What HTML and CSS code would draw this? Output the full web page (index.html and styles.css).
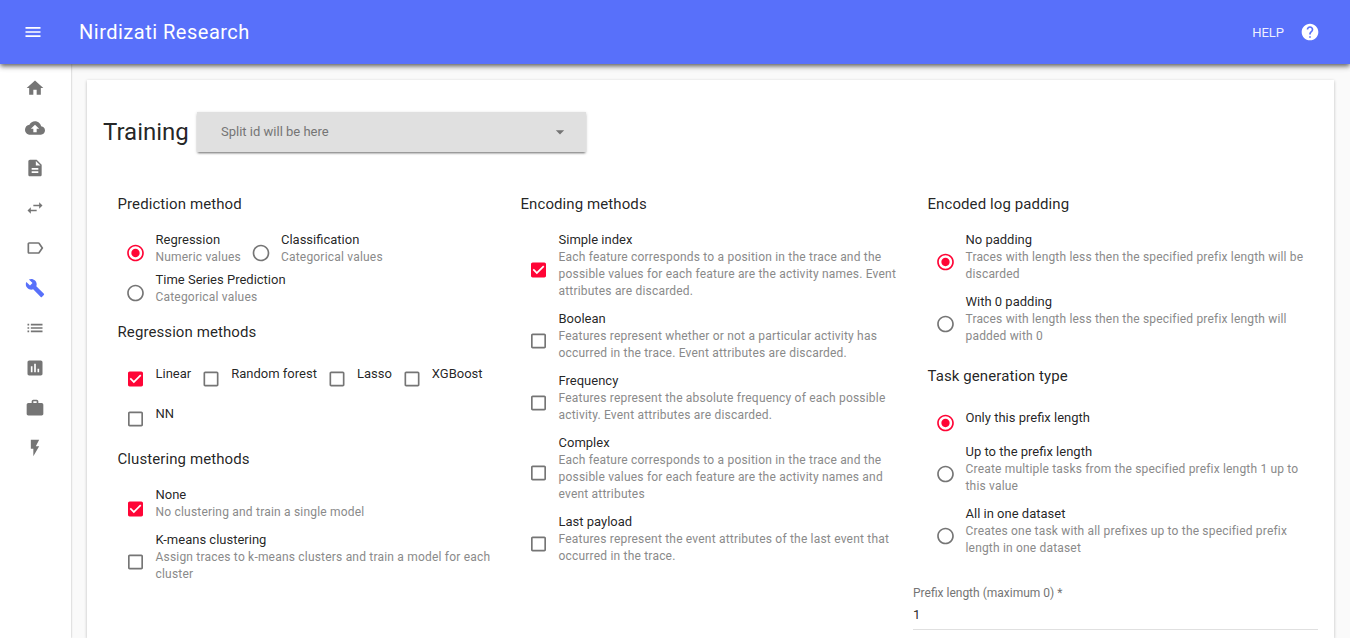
FILE: index.html
```html
<!DOCTYPE html>
<html lang="en">
<head>
<meta charset="utf-8">
<title>Nirdizati Research</title>
<link rel="stylesheet" href="styles.css">
</head>
<body>
<svg class="defs" aria-hidden="true">
  <symbol id="on" viewBox="0 0 24 24"><path d="M12 7c-2.76 0-5 2.24-5 5s2.24 5 5 5 5-2.24 5-5-2.24-5-5-5zm0-5C6.480 2 2 6.480 2 12s4.480 10 10 10 10-4.480 10-10S17.520 2 12 2zm0 18c-4.420 0-8-3.580-8-8s3.580-8 8-8 8 3.580 8 8-3.580 8-8 8z"/></symbol>
  <symbol id="off" viewBox="0 0 24 24"><path d="M12 2C6.480 2 2 6.480 2 12s4.480 10 10 10 10-4.480 10-10S17.520 2 12 2zm0 18c-4.420 0-8-3.580-8-8s3.580-8 8-8 8 3.580 8 8-3.580 8-8 8z"/></symbol>
  <symbol id="checked" viewBox="0 0 24 24"><path d="M19 3H5c-1.110 0-2 .9-2 2v14c0 1.100.89 2 2 2h14c1.110 0 2-.9 2-2V5c0-1.100-.89-2-2-2zm-9 14l-5-5 1.410-1.410L10 14.170l7.590-7.590L19 8l-9 9z"/></symbol>
  <symbol id="box" viewBox="0 0 24 24"><path d="M19 5v14H5V5h14m0-2H5c-1.100 0-2 .9-2 2v14c0 1.100.9 2 2 2h14c1.100 0 2-.9 2-2V5c0-1.100-.9-2-2-2z"/></symbol>
</svg>

<header class="toolbar">
  <svg class="icon menu" viewBox="0 0 24 24"><path d="M3 18h18v-2H3v2zm0-5h18v-2H3v2zm0-7v2h18V6H3z"/></svg>
  <h1 class="brand">Nirdizati Research</h1>
  <span class="help">HELP</span>
  <svg class="icon help-icon" viewBox="0 0 24 24"><path d="M12 2C6.480 2 2 6.480 2 12s4.480 10 10 10 10-4.480 10-10S17.520 2 12 2zm1 17h-2v-2h2v2zm2.070-7.750l-.9.92C13.450 12.900 13 13.500 13 15h-2v-.5c0-1.100.45-2.100 1.170-2.830l1.240-1.260c.37-.36.59-.86.59-1.410 0-1.100-.9-2-2-2s-2 .9-2 2H8c0-2.210 1.790-4 4-4s4 1.790 4 4c0 .88-.36 1.680-.93 2.250z"/></svg>
</header>

<div class="shell">
  <nav class="drawer">
    <svg class="icon" viewBox="0 0 24 24"><path d="M10 20v-6h4v6h5v-8h3L12 3 2 12h3v8z"/></svg>
    <svg class="icon" viewBox="0 0 24 24"><path d="M19.350 10.040C18.670 6.590 15.640 4 12 4 9.110 4 6.600 5.640 5.350 8.040 2.340 8.360 0 10.910 0 14c0 3.310 2.690 6 6 6h13c2.760 0 5-2.240 5-5 0-2.640-2.050-4.780-4.650-4.960zM14 13v4h-4v-4H7l5-5 5 5h-3z"/></svg>
    <svg class="icon" viewBox="0 0 24 24"><path d="M14 2H6c-1.100 0-1.990.9-1.990 2L4 20c0 1.100.89 2 1.990 2H18c1.100 0 2-.9 2-2V8l-6-6zm2 16H8v-2h8v2zm0-4H8v-2h8v2zm-3-5V3.500L18.500 9H13z"/></svg>
    <svg class="icon" viewBox="0 0 24 24"><path d="M6.990 11L3 15l3.990 4v-3H14v-2H6.990v-3zM21 9l-3.990-4v3H10v2h7.010v3L21 9z"/></svg>
    <svg class="icon" viewBox="0 0 24 24"><path d="M17.630 5.840C17.270 5.330 16.670 5 16 5L5 5.010C3.900 5.010 3 5.900 3 7v10c0 1.100.9 1.990 2 1.990L16 19c.67 0 1.270-.33 1.630-.84L22 12l-4.370-6.160zM16 17H5V7h11l3.550 5L16 17z"/></svg>
    <svg class="icon active" viewBox="0 0 24 24"><path d="M22.700 19l-9.100-9.100c.9-2.300.4-5-1.500-6.900-2-2-5-2.400-7.400-1.300L9 6 6 9 1.600 4.700C.4 7.100.9 10.100 2.900 12.100c1.900 1.900 4.600 2.400 6.900 1.500l9.100 9.100c.4.4 1 .4 1.400 0l2.300-2.300c.5-.4.5-1.100.1-1.400z"/></svg>
    <svg class="icon" viewBox="0 0 24 24"><path d="M3 13h2v-2H3v2zm0 4h2v-2H3v2zm0-8h2V7H3v2zm4 4h14v-2H7v2zm0 4h14v-2H7v2zM7 7v2h14V7H7z"/></svg>
    <svg class="icon" viewBox="0 0 24 24"><path d="M19 3H5c-1.100 0-2 .9-2 2v14c0 1.100.9 2 2 2h14c1.100 0 2-.9 2-2V5c0-1.100-.9-2-2-2zM9 17H7v-7h2v7zm4 0h-2V7h2v10zm4 0h-2v-4h2v4z"/></svg>
    <svg class="icon" viewBox="0 0 24 24"><path d="M20 6h-4V4c0-1.110-.89-2-2-2h-4c-1.110 0-2 .89-2 2v2H4c-1.110 0-1.990.89-1.990 2L2 19c0 1.110.89 2 2 2h16c1.110 0 2-.89 2-2V8c0-1.110-.89-2-2-2zm-6 0h-4V4h4v2z"/></svg>
    <svg class="icon" viewBox="0 0 24 24"><path d="M7 2v11h3v9l7-12h-4l4-8z"/></svg>
  </nav>

  <main class="card">
    <div class="title-row">
      <h2 class="title">Training</h2>
      <div class="select"><span>Split id will be here</span><svg class="arrow" viewBox="0 0 24 24"><path d="M7 10l5 5 5-5z"/></svg></div>
    </div>

    <div class="columns">
      <div class="col col-a">
        <section class="group">
          <h3 class="legend">Prediction method</h3>
          <div class="inline">
            <label class="control"><svg class="mark on"><use href="#on"/></svg><span>Regression<small>Numeric values</small></span></label>
            <label class="control"><svg class="mark"><use href="#off"/></svg><span>Classification<small>Categorical values</small></span></label>
            <label class="control"><svg class="mark"><use href="#off"/></svg><span>Time Series Prediction<small>Categorical values</small></span></label>
          </div>
        </section>
        <section class="group regression">
          <h3 class="legend">Regression methods</h3>
          <div class="inline plain">
            <label class="control"><svg class="mark on"><use href="#checked"/></svg><span>Linear</span></label>
            <label class="control"><svg class="mark"><use href="#box"/></svg><span>Random forest</span></label>
            <label class="control"><svg class="mark"><use href="#box"/></svg><span>Lasso</span></label>
            <label class="control"><svg class="mark"><use href="#box"/></svg><span>XGBoost</span></label>
            <label class="control"><svg class="mark"><use href="#box"/></svg><span>NN</span></label>
          </div>
        </section>
        <section class="group clustering">
          <h3 class="legend">Clustering methods</h3>
          <div class="stack">
            <label class="control"><svg class="mark on"><use href="#checked"/></svg><span>None<small>No clustering and train a single model</small></span></label>
            <label class="control"><svg class="mark"><use href="#box"/></svg><span>K-means clustering<small>Assign traces to k-means clusters and train a model for each cluster</small></span></label>
          </div>
        </section>
      </div>

      <div class="col col-b">
        <section class="group">
          <h3 class="legend">Encoding methods</h3>
          <div class="stack">
            <label class="control"><svg class="mark on"><use href="#checked"/></svg><span>Simple index<small>Each feature corresponds to a position in the trace and the possible values for each feature are the activity names. Event attributes are discarded.</small></span></label>
            <label class="control"><svg class="mark"><use href="#box"/></svg><span>Boolean<small>Features represent whether or not a particular activity has occurred in the trace. Event attributes are discarded.</small></span></label>
            <label class="control"><svg class="mark"><use href="#box"/></svg><span>Frequency<small>Features represent the absolute frequency of each possible activity. Event attributes are discarded.</small></span></label>
            <label class="control"><svg class="mark"><use href="#box"/></svg><span>Complex<small>Each feature corresponds to a position in the trace and the possible values for each feature are the activity names and event attributes</small></span></label>
            <label class="control"><svg class="mark"><use href="#box"/></svg><span>Last payload<small>Features represent the event attributes of the last event that occurred in the trace.</small></span></label>
          </div>
        </section>
      </div>

      <div class="col col-c">
        <section class="group">
          <h3 class="legend">Encoded log padding</h3>
          <div class="stack">
            <label class="control"><svg class="mark on"><use href="#on"/></svg><span>No padding<small>Traces with length less then the specified prefix length will be discarded</small></span></label>
            <label class="control"><svg class="mark"><use href="#off"/></svg><span>With 0 padding<small>Traces with length less then the specified prefix length will padded with 0</small></span></label>
          </div>
        </section>
        <section class="group task">
          <h3 class="legend">Task generation type</h3>
          <div class="stack plain">
            <label class="control"><svg class="mark on"><use href="#on"/></svg><span>Only this prefix length</span></label>
            <label class="control"><svg class="mark"><use href="#off"/></svg><span>Up to the prefix length<small>Create multiple tasks from the specified prefix length 1 up to this value</small></span></label>
            <label class="control"><svg class="mark"><use href="#off"/></svg><span>All in one dataset<small>Creates one task with all prefixes up to the specified prefix length in one dataset</small></span></label>
          </div>
        </section>
        <div class="field">
          <div class="field-label">Prefix length (maximum 0) *</div>
          <div class="field-value">1</div>
        </div>
      </div>
    </div>
  </main>
</div>
</body>
</html>
```

FILE: styles.css
```css
* { box-sizing: border-box; }
html, body { height: 100%; }
body {
  margin: 0;
  overflow: hidden;
  display: flex;
  flex-direction: column;
  background: #fafafa;
  color: rgba(0, 0, 0, .87);
  font-family: Roboto, sans-serif;
  font-size: 13px;
}
h1, h2, h3 { margin: 0; font-weight: 400; }
svg { display: block; fill: currentColor; }
.defs { display: none; }
.icon { width: 20px; height: 20px; flex: none; }

.toolbar {
  flex: none;
  z-index: 2;
  display: flex;
  align-items: center;
  height: 64px;
  padding: 0 30px 0 23px;
  background: #5870fa;
  color: #fff;
  box-shadow: 0 2px 4px -1px rgba(0, 0, 0, .4), 0 3px 5px rgba(0, 0, 0, .3), 0 1px 8px rgba(0, 0, 0, .12);
}
.brand { margin-left: 36px; font-size: 20px; line-height: 24px; letter-spacing: .5px; flex: 1; }
.help { margin-right: 16px; padding-top: 2px; font-size: 13px; line-height: 20px; color: rgba(255, 255, 255, .92); }

.shell { flex: 1; min-height: 0; display: flex; }
.drawer {
  width: 71px;
  flex: none;
  display: flex;
  flex-direction: column;
  gap: 20px;
  padding: 14px 0 0 25px;
  background: #fff;
  color: #757575;
  box-shadow: 0 0 2px rgba(0, 0, 0, .3);
}
.drawer .active { color: #5870fa; }

.card {
  flex: none;
  width: 1247px;
  height: 558px;
  margin: 16px 0 0 16px;
  padding: 32px 16px 0;
  background: #fff;
  box-shadow: 0 1px 3px rgba(0, 0, 0, .25);
}
.title-row { display: flex; align-items: center; height: 40px; }
.title { width: 94px; font-size: 24px; line-height: 32px; }
.select {
  display: flex;
  align-items: center;
  justify-content: space-between;
  width: 389px;
  height: 40px;
  padding: 0 16px 0 24px;
  background: #e0e0e0;
  color: #757575;
  box-shadow: 0 2px 2px -1px rgba(0, 0, 0, .45), 0 1px 3px rgba(0, 0, 0, .2);
}
.select span { padding-bottom: 2px; }
.arrow { width: 20px; height: 20px; }

.columns { display: flex; padding-top: 40px; }
.col-a { width: 402.5px; padding: 0 12px 0 12.5px; }
.col-b { width: 407.5px; padding: 0 12px 0 13px; }
.col-c { width: 405px; padding: 0 0 0 12.5px; }
.legend { padding-left: 2px; font-size: 15px; line-height: 24px; letter-spacing: .09px; }
.inline { display: flex; flex-wrap: wrap; padding-top: 12px; }
.stack { padding-top: 15px; }
.inline .control { height: 40px; }
.stack .control { padding-bottom: 11px; }
.control { display: flex; align-items: center; line-height: 17px; }
.mark { flex: none; width: 20px; height: 20px; margin: 10px 10px 0; color: #757575; }
.mark use { transform: translateX(-.5px); }
.inline .control:not(:first-child):not(:last-child) use { transform: none; }
.mark.on { color: #ff0536; }
small { display: block; margin: 1px 0 -1px; font-size: 12px; line-height: 17px; letter-spacing: .2px; color: #8a8a8a; }
.col-c small { letter-spacing: .18px; }
.regression, .clustering { padding-top: 12px; }
.clustering .mark.on { margin-top: 12px; }
.task { padding-top: 9px; }
.inline.plain { padding: 9px 0 2px; }
.inline.plain .mark { margin-top: 12px; }
.stack.plain { padding-top: 13px; }
.stack.plain .control:first-child { padding-bottom: 10px; }
.stack.plain .mark.on { margin-top: 12px; }

.field { margin-left: -12.5px; padding: 18px 0 2px; border-bottom: 1px solid #e0e0e0; }
.field-label { font-size: 12px; line-height: 17px; color: #757575; }
.field-value { line-height: 25px; }
```
